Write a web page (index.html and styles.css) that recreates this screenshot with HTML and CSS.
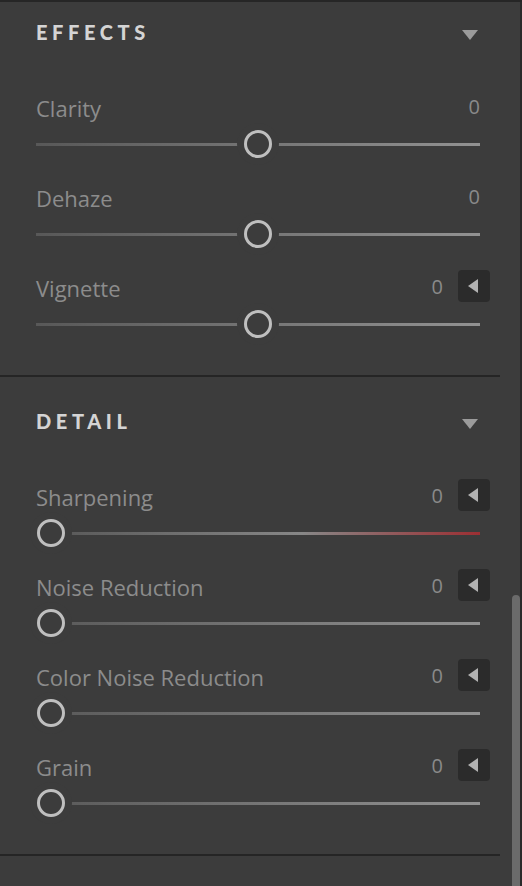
FILE: index.html
```html
<!DOCTYPE html>
<html lang="en">
<head>
    <meta charset="UTF-8">
    <title>Develop - Effects / Detail</title>
    <link rel="stylesheet" href="styles.css">
</head>
<body>
<div class="frame">
    <div class="panel">

        <!-- Effects -->
        <section class="group group-first">
            <div class="group-head">
                <span class="group-title">EFFECTS</span>
                <span class="caret"></span>
            </div>
            <div class="row">
                <div class="row-head">
                    <span class="label">Clarity</span>
                    <span class="value">0</span>
                </div>
                <div class="slider slider-center"><span class="thumb"></span></div>
            </div>
            <div class="row">
                <div class="row-head">
                    <span class="label">Dehaze</span>
                    <span class="value">0</span>
                </div>
                <div class="slider slider-center"><span class="thumb"></span></div>
            </div>
            <div class="row">
                <div class="row-head">
                    <span class="label">Vignette</span>
                    <span class="value">0</span>
                    <button class="more-btn"><span class="more-arrow"></span></button>
                </div>
                <div class="slider slider-center"><span class="thumb"></span></div>
            </div>
        </section>

        <div class="divider"></div>

        <!-- Detail -->
        <section class="group">
            <div class="group-head">
                <span class="group-title">DETAIL</span>
                <span class="caret"></span>
            </div>
            <div class="row">
                <div class="row-head">
                    <span class="label">Sharpening</span>
                    <span class="value">0</span>
                    <button class="more-btn"><span class="more-arrow"></span></button>
                </div>
                <div class="slider slider-red"><span class="thumb"></span></div>
            </div>
            <div class="row">
                <div class="row-head">
                    <span class="label">Noise Reduction</span>
                    <span class="value">0</span>
                    <button class="more-btn"><span class="more-arrow"></span></button>
                </div>
                <div class="slider"><span class="thumb"></span></div>
            </div>
            <div class="row">
                <div class="row-head">
                    <span class="label">Color Noise Reduction</span>
                    <span class="value">0</span>
                    <button class="more-btn"><span class="more-arrow"></span></button>
                </div>
                <div class="slider"><span class="thumb"></span></div>
            </div>
            <div class="row">
                <div class="row-head">
                    <span class="label">Grain</span>
                    <span class="value">0</span>
                    <button class="more-btn"><span class="more-arrow"></span></button>
                </div>
                <div class="slider"><span class="thumb"></span></div>
            </div>
        </section>

        <div class="divider"></div>
    </div>

    <div class="scroll-gutter">
        <div class="scroll-thumb"></div>
    </div>
</div>
</body>
</html>
```

FILE: styles.css
```css
html, body { margin: 0; height: 100%; }
body { background: #3c3c3c; font-family: "Open Sans", Lato, sans-serif; overflow: hidden; }

.frame { display: flex; height: 100%; border-top: 2px solid #262626; box-sizing: border-box; }
.panel { width: 512px; flex: none; }

/* scrollbar on the right */
.scroll-gutter { width: 8px; display: flex; flex-direction: column; border-right: 2px solid #2a2a2a; }
.scroll-thumb { margin-top: 593px; flex: 1; background: #6b6b6b; border-radius: 4px 4px 0 0; }

/* groups */
.group { padding: 32px 32px 37px 36px; }
.group-first { padding-top: 18px; }
.group-head { display: flex; align-items: center; justify-content: space-between; height: 24px; margin-bottom: 52px; }
.group-title { font-family: Lato, "Open Sans", sans-serif; font-size: 20px; font-weight: 900; letter-spacing: 4.6px; color: #d4d4d4; line-height: 24px; }
.caret { width: 0; height: 0; border-left: 8px solid transparent; border-right: 8px solid transparent; border-top: 10px solid #9b9b9b; margin: 5px 2px 0 0; }

.divider { height: 2px; background: #252525; margin-right: 12px; }

/* slider rows */
.row { margin-bottom: 28px; }
.row:last-child { margin-bottom: 0; }
.row-head { display: flex; align-items: center; height: 24px; margin-bottom: 10px; }
.label { flex: 1; font-size: 22px; line-height: 24px; color: #8c8c8c; }
.value { font-size: 20px; line-height: 24px; color: #8a8a8a; margin-top: -2px; }
.more-btn { width: 32px; height: 32px; margin: -6px -10px -2px 15px; padding: 0; border: none; border-radius: 4px; background: #2b2b2b; display: flex; align-items: center; justify-content: center; }
.more-arrow { width: 0; height: 0; border-top: 7px solid transparent; border-bottom: 7px solid transparent; border-right: 10px solid #b2b2b2; margin-left: -2px; }

.slider { height: 28px; display: flex; align-items: center; background: linear-gradient(to right, #585858, #929292) center / 100% 3px no-repeat; }
.slider-center { justify-content: center; }
.slider-red { background-image: linear-gradient(to right, #555555, #878787 60%, #9c2f33); }
.thumb { width: 22px; height: 22px; margin-left: 1px; border: 3px solid #bfbfbf; border-radius: 50%; background: #3c3c3c; box-shadow: 0 0 0 7px #3c3c3c; }
.slider-center .thumb { margin-left: 0; }
```
